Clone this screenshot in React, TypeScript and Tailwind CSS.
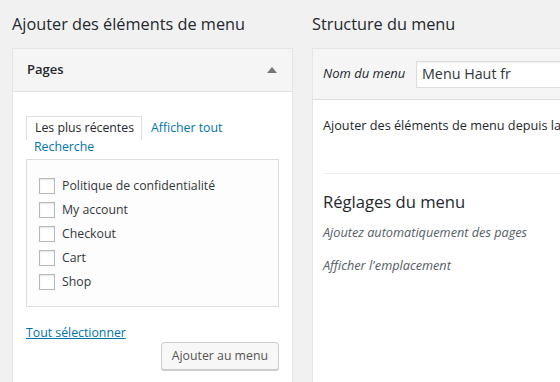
const PAGES = [
  "Politique de confidentialité",
  "My account",
  "Checkout",
  "Cart",
  "Shop",
];

function PagesBox() {
  return (
    <div className="bg-white border border-[#e5e5e5] shadow-[0_1px_1px_rgba(0,0,0,0.04)]">
      <div className="h-[43px] bg-[#f5f5f5] border-b border-[#e1e1e1] flex items-center justify-between pl-[14px] pr-[14px]">
        <span className="text-[13px] font-semibold text-[#23282d]">Pages</span>
        <span className="w-0 h-0 border-l-[5px] border-r-[5px] border-b-[6px] border-l-transparent border-r-transparent border-b-[#72777c] mr-[1px]" />
      </div>
      <div className="px-[13px] pt-[24px] pb-[14px]">
        <div className="text-[12.3px]">
          <div className="flex items-end">
            <span className="border border-[#dfdfdf] border-b-0 bg-white text-[#23282d] pl-[8px] pr-[7px] h-[24px] flex items-center">
              Les plus récentes
            </span>
            <span className="text-[#0073aa] ml-[9px] h-[24px] flex items-center">Afficher tout</span>
          </div>
          <div className="text-[#0073aa] pl-[8px] h-[16px] leading-[14px]">Recherche</div>
        </div>
        <div className="mt-[3px] border border-[#dddddd] bg-[#fdfdfd] pt-[14px] pb-[12px] pl-[12px]">
          {PAGES.map((p) => (
            <label key={p} className="flex items-center h-[24px] gap-[7px] text-[12.3px] text-[#32373c]">
              <span className="w-[16px] h-[16px] border border-[#b4b9be] bg-white shadow-[inset_0_1px_2px_rgba(0,0,0,0.1)] shrink-0" />
              {p}
            </label>
          ))}
        </div>
        <div className="mt-[17px] text-[12.3px] leading-[18px]">
          <span className="text-[#0073aa] underline">Tout sélectionner</span>
        </div>
        <div className="flex justify-end">
          <button className="h-[28px] px-[10px] text-[12.3px] text-[#555555] bg-[#f7f7f7] border border-[#cccccc] rounded-[3px] shadow-[0_1px_0_#cccccc]">
            Ajouter au menu
          </button>
        </div>
      </div>
    </div>
  );
}

function MenuStructure() {
  return (
    <div className="w-[320px] bg-white border border-[#e5e5e5] border-r-0 h-full">
      <div className="bg-[#f5f5f5] border-b border-[#dddddd] h-[51px] flex items-center pl-[10px]">
        <span className="italic text-[13px] text-[#23282d] w-[93px]">Nom du menu</span>
        <div className="h-[27px] flex-1 bg-white border border-[#dddddd] shadow-[inset_0_1px_2px_rgba(0,0,0,0.07)] flex items-center pl-[5px] text-[14.3px] text-[#32373c] whitespace-nowrap overflow-hidden">
          Menu Haut fr
        </div>
      </div>
      <div className="px-[10px]">
        <p className="pt-[16px] text-[12.7px] text-[#23282d] whitespace-nowrap">
          Ajouter des éléments de menu depuis la colonne de gauche.
        </p>
        <div className="mt-[38px] border-t border-[#eeeeee]" />
        <h3 className="mt-[17px] text-[16.6px] text-[#23282d] font-normal leading-[22px]">Réglages du menu</h3>
        <p className="mt-[10px] italic text-[12.7px] text-[#555d66]">Ajoutez automatiquement des pages</p>
        <p className="mt-[14px] italic text-[12.7px] text-[#555d66]">Afficher l'emplacement</p>
      </div>
    </div>
  );
}

export default function App() {
  return (
    <div
      className="w-[560px] h-[382px] overflow-hidden bg-[#f1f1f1] text-[#23282d]"
      style={{ fontFamily: '"Open Sans", "Noto Sans", sans-serif' }}
    >
      <div className="flex gap-[19px] pl-[12px]">
        <div className="w-[281px] shrink-0">
          <h2 className="text-[16.3px] leading-[24px] pt-[12px] pb-[12px] text-[#23282d]">
            Ajouter des éléments de menu
          </h2>
          <PagesBox />
        </div>
        <div className="flex-1 min-w-0 flex flex-col overflow-hidden">
          <h2 className="text-[16.3px] leading-[24px] pt-[12px] pb-[12px] text-[#23282d]">
            Structure du menu
          </h2>
          <div className="flex-1">
            <MenuStructure />
          </div>
        </div>
      </div>
    </div>
  );
}
